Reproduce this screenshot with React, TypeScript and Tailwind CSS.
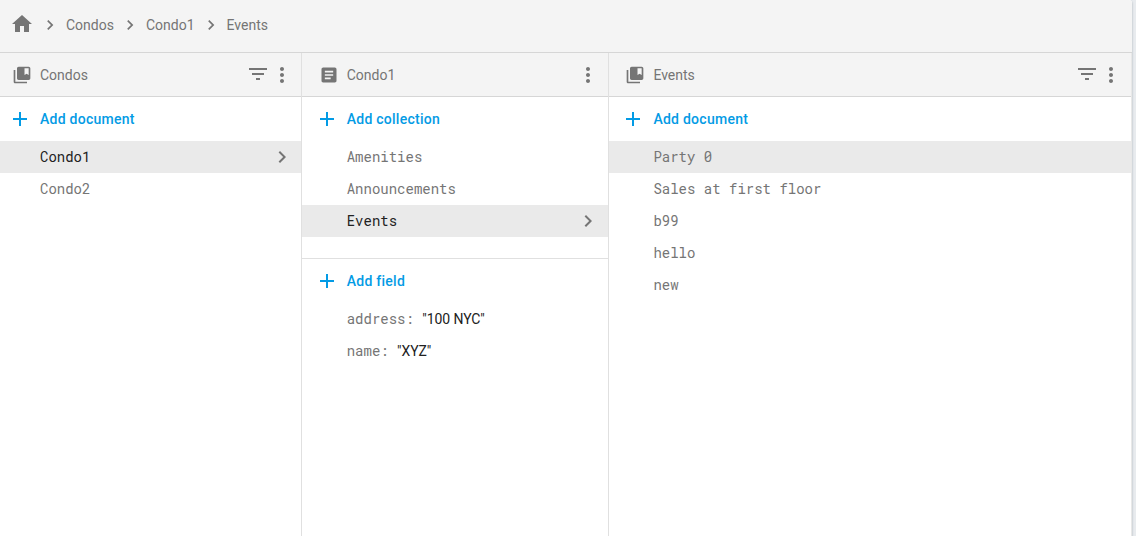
import type { ReactNode } from 'react';

const ICONS = {
  home: 'M10 20v-6h4v6h5v-8h3L12 3 2 12h3v8z',
  chevron: 'M10 6L8.59 7.41 13.17 12l-4.58 4.59L10 18l6-6z',
  collection:
    'M4 6H2v14c0 1.100.9 2 2 2h14v-2H4V6zm16-4H8c-1.100 0-2 .9-2 2v12c0 1.100.9 2 2 2h12c1.100 0 2-.9 2-2V4c0-1.100-.9-2-2-2zm0 10l-2.500-1.500L15 12V4h5v8z',
  document:
    'M19 3H5c-1.100 0-2 .9-2 2v14c0 1.100.9 2 2 2h14c1.100 0 2-.9 2-2V5c0-1.100-.9-2-2-2zm-5 14H7v-2h7v2zm3-4H7v-2h10v2zm0-4H7V7h10v2z',
  filter: 'M10 18h4v-2h-4v2zM3 6v2h18V6H3zm3 7h12v-2H6v2z',
  more: 'M12 8c1.100 0 2-.9 2-2s-.9-2-2-2-2 .9-2 2 .9 2 2 2zm0 2c-1.100 0-2 .9-2 2s.9 2 2 2 2-.9 2-2-.9-2-2-2zm0 6c-1.100 0-2 .9-2 2s.9 2 2 2 2-.9 2-2-.9-2-2-2z',
  add: 'M19 13h-6v6h-2v-6H5v-2h6V5h2v6h6v2z',
};

function Icon({ name, className }: { name: keyof typeof ICONS; className: string }) {
  return (
    <svg viewBox="0 0 24 24" fill="currentColor" className={`shrink-0 ${className}`} aria-hidden="true">
      <path d={ICONS[name]} />
    </svg>
  );
}

function PanelHeader({ title, icon, filter, inset }: { title: string; icon: 'collection' | 'document'; filter?: boolean; inset: string }) {
  return (
    <header className={`flex h-11 shrink-0 items-center border-b border-[#d6d6d6] bg-[#f4f4f4] pt-px text-[#757575] ${inset}`}>
      <Icon name={icon} className="ml-1 size-5" />
      <span className="ml-2 flex-1">{title}</span>
      {filter && <Icon name="filter" className="mb-0.5 size-6" />}
      <Icon name="more" className="size-6" />
    </header>
  );
}

function AddButton({ label, inset }: { label: string; inset: string }) {
  return (
    <button className={`flex h-11 w-full shrink-0 items-center text-left font-medium tracking-[0.26px] text-[#039be5] ${inset}`}>
      <Icon name="add" className="size-6" />
      <span className="ml-2">{label}</span>
    </button>
  );
}

function Row({ children, selected, open, inset }: { children: ReactNode; selected?: boolean; open?: boolean; inset: string }) {
  return (
    <li
      className={`flex h-8 items-center font-['Roboto_Mono','Liberation_Mono',monospace] ${inset} ${selected ? 'bg-[#eaeaea]' : ''} ${open ? 'text-[#212121]' : 'text-[#757575]'}`}
    >
      <span className="ml-8 flex-1 whitespace-pre">{children}</span>
      {open && <Icon name="chevron" className="size-6 text-[#757575]" />}
    </li>
  );
}

function Field({ name, value, inset }: { name: string; value: string; inset: string }) {
  return (
    <Row inset={inset}>
      {name}:{' '}
      <span className="font-[Roboto,sans-serif] tracking-[-0.08px] text-[#212121]">"{value}"</span>
    </Row>
  );
}

const FIRST = 'pl-2 pr-[7px]';
const SECOND = 'pl-[12.700px] pr-2';
const THIRD = 'pl-[12.400px] pr-2';

export default function App() {
  return (
    <div className="flex h-[536px] w-[1136px] overflow-hidden bg-[#e8ebee] font-[Roboto,sans-serif] text-sm leading-5">
      <main className="flex w-[1132px] flex-col rounded-tr-[3px] bg-white shadow-[0_1px_2px_rgba(60,75,85,0.45)]">
        <nav className="flex h-[53px] shrink-0 items-center rounded-tr-[3px] border-b border-[#d6d6d6] bg-[#f4f4f4] pl-2.5 text-[#757575]">
          <Icon name="home" className="mb-1 size-6" />
          {['Condos', 'Condo1', 'Events'].map((crumb) => (
            <div key={crumb} className="flex items-center pb-0.5">
              <Icon name="chevron" className="ml-1.5 size-5" />
              <span className="ml-1.5">{crumb}</span>
            </div>
          ))}
        </nav>
        <div className="flex min-h-0 flex-1">
          <section className="flex w-[302px] flex-col border-r border-[#e0e0e0]">
            <PanelHeader title="Condos" icon="collection" filter inset={FIRST} />
            <AddButton label="Add document" inset={FIRST} />
            <ul>
              <Row selected open inset={FIRST}>Condo1</Row>
              <Row inset={FIRST}>Condo2</Row>
            </ul>
          </section>
          <section className="flex w-[307px] flex-col border-r border-[#e0e0e0]">
            <PanelHeader title="Condo1" icon="document" inset={SECOND} />
            <AddButton label="Add collection" inset={SECOND} />
            <ul className="h-[118px] shrink-0 border-b border-[#e0e0e0]">
              <Row inset={SECOND}>Amenities</Row>
              <Row inset={SECOND}>Announcements</Row>
              <Row selected open inset={SECOND}>Events</Row>
            </ul>
            <AddButton label="Add field" inset={SECOND} />
            <ul>
              <Field name="address" value="100 NYC" inset={SECOND} />
              <Field name="name" value="XYZ" inset={SECOND} />
            </ul>
          </section>
          <section className="flex w-[523px] flex-col border-r border-[#e8e8e8]">
            <PanelHeader title="Events" icon="collection" filter inset={THIRD} />
            <AddButton label="Add document" inset={THIRD} />
            <ul>
              {['Party 0', 'Sales at first floor', 'b99', 'hello', 'new'].map((id, i) => (
                <Row key={id} selected={i === 0} inset={THIRD}>{id}</Row>
              ))}
            </ul>
          </section>
        </div>
      </main>
    </div>
  );
}
